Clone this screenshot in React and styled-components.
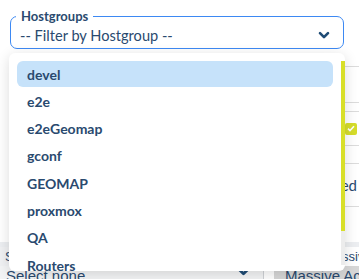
import styled, { createGlobalStyle } from 'styled-components'

const GlobalStyle = createGlobalStyle`
  html, body {
    margin: 0;
    padding: 0;
    background: #ffffff;
  }
  body {
    font-family: Lato, "Noto Sans", sans-serif;
    color: #2a4a6f;
    overflow: hidden;
  }
`

const hostgroups = ['devel', 'e2e', 'e2eGeomap', 'gconf', 'GEOMAP', 'proxmox', 'QA', 'Routers', 'Servers']

const rows = [
	{ h: 36 },
	{ h: 9 },
	{ h: 34, check: true },
	{ h: 18 },
	{ h: 43, text: 'Enabled' },
]

const Page = styled.div`
	position: relative;
	width: 359px;
	height: 279px;
	overflow: hidden;
	display: flex;
	flex-direction: column;
`

const Header = styled.div`
	padding: 0 15px 0 10px;
`

const Fieldset = styled.fieldset`
	margin: 9px 0 0;
	padding: 0 10px 0 5px;
	border: 1px solid #3d89f3;
	border-radius: 7px;
	min-width: 0;
`

const Legend = styled.legend`
	padding: 0 5px;
	font-size: 13px;
	line-height: 14px;
	font-weight: 700;
	color: #2a4a6f;
`

const SelectRow = styled.div`
	height: 24px;
	display: flex;
	align-items: center;
	justify-content: space-between;
	padding: 0 3px 1px 4px;
	font-size: 14.6px;
	color: #2a4a6f;
`

const Chevron = ({ color = '#1e4b75', size = 12 }) => (
	<svg width={size} height={size * 0.75} viewBox="0 0 12 9">
		<path d="M2 2.2 L6 6.2 L10 2.2" fill="none" stroke={color} strokeWidth="2.6" strokeLinecap="round" strokeLinejoin="round" />
	</svg>
)

const Table = styled.div`
	margin: 17px 0 0 20px;
	border-top: 1px solid #dcdcdc;
`

const Row = styled.div`
	height: ${(p) => p.$h}px;
	border-bottom: 1px solid #dcdcdc;
	display: flex;
	align-items: center;
	justify-content: flex-end;
	padding-right: 2px;
	font-size: 15px;
	color: #2a4a6f;
	box-sizing: border-box;
`

const Check = styled.span`
	width: 12px;
	height: 12px;
	border-radius: 2px;
	background: #d6dd2b;
	display: flex;
	align-items: center;
	justify-content: center;
`

const Footer = styled.div`
	margin-top: 35px;
	border-top: 5px solid #eceef1;
`

const LabelRow = styled.div`
	display: grid;
	grid-template-columns: 275px 1fr;
	height: 19px;
	align-items: center;
	font-family: 'Liberation Sans', Arial, sans-serif;
	font-size: 13px;
	color: #2a4a6f;
`

const Label = styled.span`
	padding-left: ${(p) => p.$indent}px;
	white-space: nowrap;
	align-self: stretch;
	display: flex;
	align-items: center;
	background: ${(p) => p.$bg || 'transparent'};
	width: fit-content;
`

const ControlRow = styled.div`
	display: flex;
	height: 24px;
	font-family: 'Liberation Sans', Arial, sans-serif;
	font-size: 15px;
	color: #2a4a6f;
`

const SelectBox = styled.div`
	width: 264px;
	box-sizing: border-box;
	display: flex;
	justify-content: space-between;
	padding: 1px 13px 0 6px;
	background: #f3f4f5;
	border-right: 1px solid #cfd2d6;
`

const ActionBox = styled.div`
	margin-left: 10px;
	flex: 1;
	padding: 1px 0 0 11px;
	background: #d7d7d7;
	white-space: nowrap;
	overflow: hidden;
`

const Dropdown = styled.div`
	position: absolute;
	top: 53px;
	left: 9px;
	width: 336px;
	height: 218px;
	display: flex;
	background: #ffffff;
	border-radius: 6px;
	box-shadow: 0 3px 14px rgba(0, 0, 0, 0.14);
	overflow: hidden;
`

const List = styled.ul`
	flex: 1;
	list-style: none;
	margin: 0;
	padding: 8px;
	overflow: hidden;
	display: flex;
	flex-direction: column;
	gap: 1.3px;
`

const Rail = styled.div`
	width: 4px;
	padding: 8px 0 6px;
	display: flex;
	flex-direction: column;
`

const Track = styled.div`
	flex: 1;
	background: #ececec;
`

const Thumb = styled.div`
	height: ${(p) => p.$size}px;
	background: #d8df28;
`

const Item = styled.li`
	flex: none;
	height: 26px;
	padding: 0 10px;
	display: flex;
	align-items: center;
	border-radius: 6px;
	font-size: 14px;
	font-weight: 700;
	color: #2a4a6f;
	background: ${(p) => (p.$active ? '#c6e2fa' : 'transparent')};
`

const App = () => {
	return (
		<>
			<GlobalStyle />
			<Page>
				<Header>
					<Fieldset>
						<Legend>Hostgroups</Legend>
						<SelectRow>
							<span>-- Filter by Hostgroup --</span>
							<Chevron />
						</SelectRow>
					</Fieldset>
				</Header>

				<Table>
					{rows.map((r, i) => (
						<Row key={i} $h={r.h}>
							{r.check && (
								<Check>
									<svg width="8" height="7" viewBox="0 0 8 7">
										<path d="M1 3.6 L3 5.5 L7 1.3" fill="none" stroke="#fff" strokeWidth="1.6" />
									</svg>
								</Check>
							)}
							{r.text}
						</Row>
					))}
				</Table>

				<Footer>
					<LabelRow>
						<Label $indent={5} $bg="#f0f1f3">Select</Label>
						<Label $indent={49}>Massive actions</Label>
					</LabelRow>
					<ControlRow>
						<SelectBox>
							<span>Select none</span>
							<Chevron size={13} />
						</SelectBox>
						<ActionBox>Massive Actions</ActionBox>
					</ControlRow>
				</Footer>

				<Dropdown>
					<List>
						{hostgroups.map((g, i) => (
							<Item key={g} $active={i === 0}>
								{g}
							</Item>
						))}
					</List>
					<Rail>
						<Track>
							<Thumb $size={170} />
						</Track>
					</Rail>
				</Dropdown>
			</Page>
		</>
	)
}

export default App
